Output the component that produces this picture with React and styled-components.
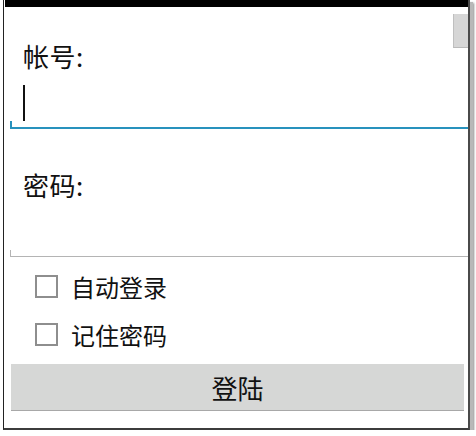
import React from 'react'
import styled, { createGlobalStyle } from 'styled-components'

const GlobalStyle = createGlobalStyle`
  html, body {
    margin: 0;
    padding: 0;
    background: #fff;
  }
  body {
    font-family: "Noto Sans CJK SC", "Noto Sans", sans-serif;
    color: #111;
  }
`;

const Frame = styled.div`
  position: relative;
  margin-left: 3px;
  width: 464px;
  height: 428px;
  background: #fff;
  border-left: 1px solid #222;
  border-right: 2px solid #4a4a4a;
  border-bottom: 2px solid #3c3c3c;
  box-shadow: 3px 2px 0 #b8b8b8, 4px 3px 2px rgba(0, 0, 0, 0.45);
  display: flex;
  flex-direction: column;
`;

const StatusBar = styled.div`
  height: 7px;
  margin-left: 1px;
  background: #000;
`;

const ScrollThumb = styled.div`
  position: absolute;
  top: 14px;
  right: 0;
  width: 15px;
  height: 34px;
  background: #d6d6d6;
  border-left: 1px solid #bfbfbf;
  border-bottom: 1px solid #b9b9b9;
  box-sizing: border-box;
`;

const Label = styled.div`
  margin-top: ${p => p.$top}px;
  padding-left: 19px;
  font-size: 26px;
  line-height: 26px;
  height: 26px;
  letter-spacing: 0.5px;
`;

const Field = styled.div`
  position: relative;
  margin-left: 6px;
  height: ${p => p.$height}px;
  border-bottom: ${p => (p.$active ? '2px solid #2892bd' : '1px solid #b4b4b4')};
  box-sizing: content-box;

  &::before {
    content: "";
    position: absolute;
    left: 0;
    bottom: 0;
    width: ${p => (p.$active ? 2 : 1)}px;
    height: 6px;
    background: ${p => (p.$active ? '#2892bd' : '#b4b4b4')};
  }
`;

const Caret = styled.span`
  display: block;
  margin-left: 13px;
  margin-top: 16px;
  width: 2px;
  height: 36px;
  background: #111;
`;

const CheckRow = styled.label`
  display: flex;
  align-items: center;
  margin-top: ${p => p.$top}px;
  margin-left: 31px;
  height: 23px;
  gap: 13px;
  font-size: 24px;
  line-height: 24px;
`;

const Box = styled.span`
  width: 23px;
  height: 23px;
  border: 2px solid #8e8e8e;
  box-sizing: border-box;
  background: #fff;
`;

const LoginButton = styled.button`
  margin-top: 18px;
  margin-left: 7px;
  width: 453px;
  height: 47px;
  padding: 0;
  border: none;
  border-bottom: 1px solid #a8a8a8;
  background: #d6d7d6;
  font-family: "Noto Sans CJK SC", "Noto Sans", sans-serif;
  font-size: 26px;
  color: #111;
  text-align: center;
`;

const App = () => {
  return (
    <>
      <GlobalStyle />
      <Frame>
        <StatusBar />
        <ScrollThumb />
        <Label $top={36}>帐号:</Label>
        <Field $height={58} $active>
          <Caret />
        </Field>
        <Label $top={43}>密码:</Label>
        <Field $height={58} />
        <CheckRow $top={18}>
          <Box />
          自动登录
        </CheckRow>
        <CheckRow $top={25}>
          <Box />
          记住密码
        </CheckRow>
        <LoginButton>登陆</LoginButton>
      </Frame>
    </>
  )
}

export default App
